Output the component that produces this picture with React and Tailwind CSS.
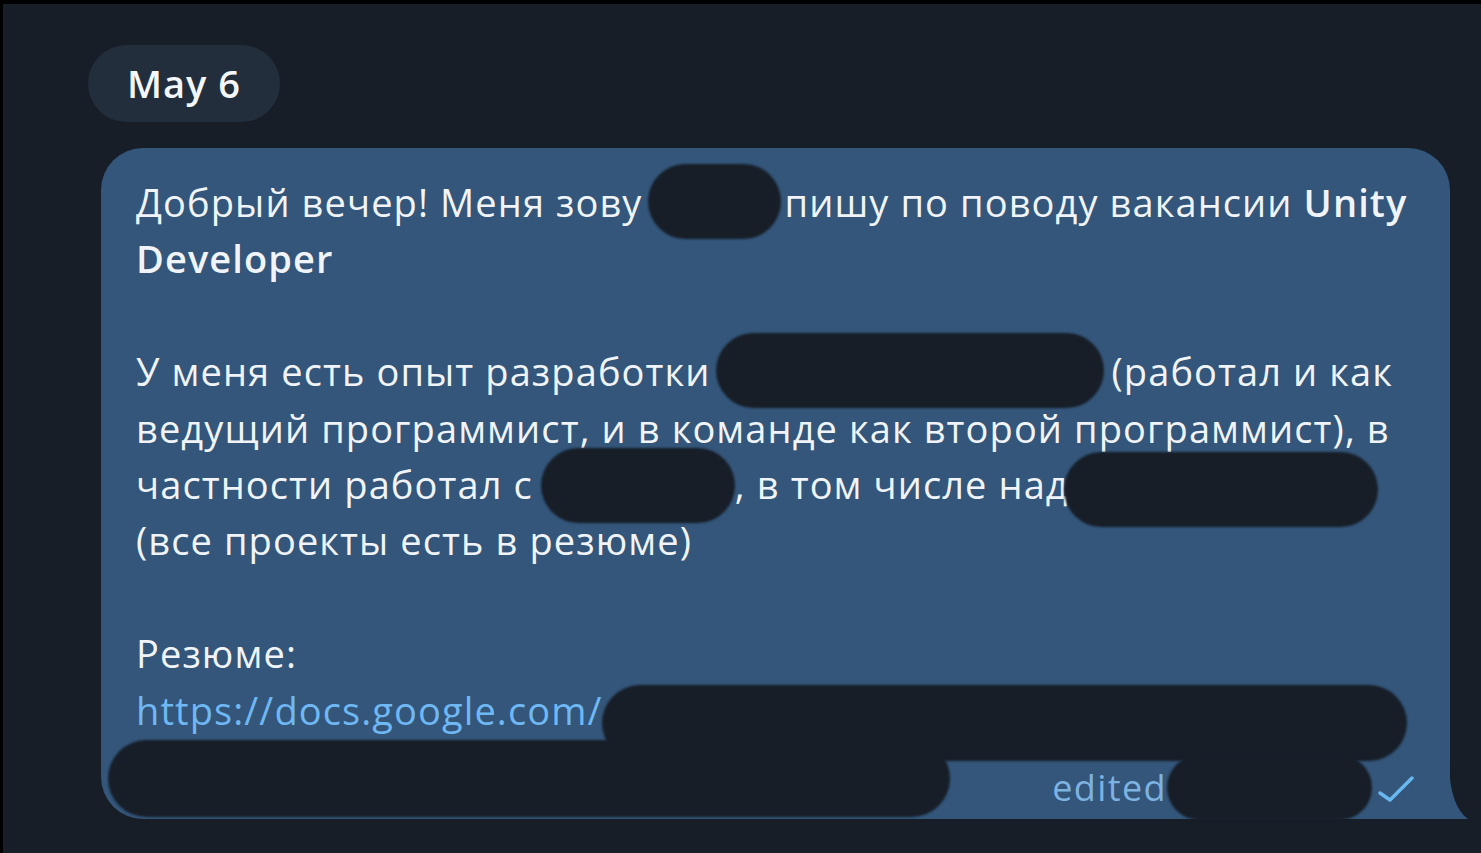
import React from 'react';

const Blot = ({ w, left = 0, top = -10, width, height = 75 }) => (
  <span className="relative inline-block h-[1em] align-baseline" style={{ width: w }}>
    <span
      className="absolute rounded-full bg-[#171e28] blur-[1px]"
      style={{ left, top, width, height }}
    />
  </span>
);

const Line = ({ children }) => <div className="whitespace-nowrap h-[56.4px]">{children}</div>;

export default function App() {
  return (
    <div
      className="w-[1481px] h-[853px] overflow-hidden bg-[#171e28] border-t-4 border-l-[3px] border-black"
      style={{ fontFamily: '"Open Sans", "Noto Sans", sans-serif' }}
    >
      <div className="pl-[85px] pt-[41px]">
        <div className="inline-flex items-center h-[77px] px-[39px] rounded-full bg-[#232e3c] text-[#f4f7fa] text-[38px] tracking-[1px] font-semibold">
          May 6
        </div>
      </div>

      <div className="relative ml-[98px] mt-[26px] w-[1349px] h-[671px] bg-[#33567a] rounded-t-[42px] rounded-bl-[42px]">
        {/* tail */}
        <svg className="absolute -right-[19px] bottom-0" width="20" height="60" viewBox="0 0 20 60">
          <path d="M0 0 C0 30 6 50 19 60 L0 60 Z" fill="#33567a" />
        </svg>

        <div className="pl-[35px] pt-[26px] text-[38px] tracking-[1.1px] leading-[56.4px] text-[#f0f4f8]">
          <Line>
            Добрый вечер! Меня зову<Blot w={142} left={5} width={133} top={-15} />пишу по
            поводу вакансии <span className="font-semibold">Unity</span>
          </Line>
          <Line>
            <span className="font-semibold">Developer</span>
          </Line>
          <Line />
          <Line>
            У меня есть опыт разработки<Blot w={401} left={5} width={388} top={-15} />(работал
            и как
          </Line>
          <Line>ведущий программист, и в команде как второй программист), в</Line>
          <Line>
            частности работал с<Blot w={202} left={8} width={194} top={-13} />, в том числе
            над<Blot w={320} left={-5} width={314} top={-9} />
          </Line>
          <Line>(все проекты есть в резюме)</Line>
          <Line />
          <Line>Резюме:</Line>
          <Line>
            <span className="text-[#6fb8f3]">https://docs.google.com/</span>
            <Blot w={800} left={0} width={805} top={-2} height={76} />
          </Line>
        </div>

        {/* last row: wrapped link + meta */}
        <div className="absolute left-[7px] top-[592px] w-[842px] h-[77px] rounded-full bg-[#171e28] blur-[1px]" />
        <div className="absolute right-[34px] top-[607px] flex items-center">
          <span className="text-[36px] tracking-[1.4px] text-[#7eb2e0]">edited</span>
          <span className="inline-block w-[205px] h-[65px] rounded-full bg-[#171e28] blur-[1px]" />
          <svg className="ml-[4px]" width="40" height="30" viewBox="0 0 40 30">
            <path d="M4 20 L14 27 L36 5" fill="none" stroke="#6ab8f0" strokeWidth="3.5" strokeLinecap="round" strokeLinejoin="round" />
          </svg>
        </div>
      </div>
    </div>
  );
}
